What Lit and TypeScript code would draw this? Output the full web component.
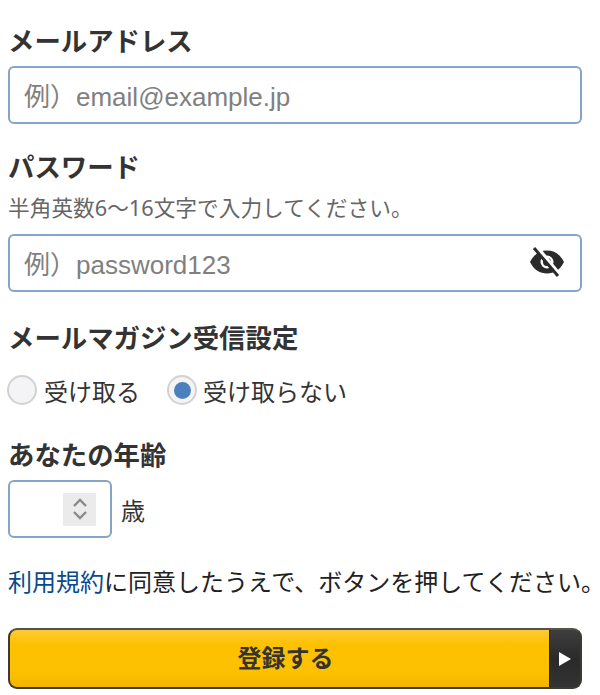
import { LitElement, html, css } from "lit";
import { customElement } from "lit/decorators.js";

@customElement("app-root")
export class AppRoot extends LitElement {
  static styles = css`
    :host {
      display: block;
      width: 600px;
      height: 695px;
      overflow: hidden;
      background: #fff;
      color: #333;
      font-family: "Noto Sans", "Noto Sans CJK JP", sans-serif;
      box-sizing: border-box;
      padding: 24px 0 0 8px;
    }
    .label {
      font-size: 26.4px;
      line-height: 34px;
      font-weight: 700;
      color: #333;
      height: 34px;
      white-space: nowrap;
    }
    .field {
      box-sizing: border-box;
      height: 58px;
      width: 574px;
      border: 2px solid #86a5c6;
      border-radius: 6px;
      margin-top: 8px;
      display: flex;
      align-items: center;
      justify-content: space-between;
      padding: 0 16px 2px 14px;
      background: #fff;
    }
    .ph {
      font-family: "Liberation Sans", "Noto Sans CJK JP", sans-serif;
      font-size: 26px;
      color: #808080;
      white-space: nowrap;
    }
    .pw-label { margin-top: 26px; }
    .hint {
      font-size: 21.7px;
      line-height: 26px;
      color: #666;
      margin-top: 11px;
      white-space: nowrap;
    }
    .field.pw { margin-top: 13px; }
    .mag { margin-top: 29px; }
    .radios {
      display: flex;
      align-items: center;
      margin-top: 20px;
      height: 30px;
      font-size: 24px;
      color: #333;
    }
    .radio {
      box-sizing: border-box;
      width: 30px;
      height: 30px;
      border-radius: 50%;
      border: 2px solid #d2d2d2;
      background: #f4f4f6;
      display: flex;
      align-items: center;
      justify-content: center;
      margin-right: 7px;
      margin-left: -1px;
    }
    .radio i {
      width: 17px;
      height: 17px;
      border-radius: 50%;
      background: #4a80bd;
    }
    .radio.two { margin-left: 27px; margin-right: 6px; }
    .age-label { margin-top: 33px; }
    .age-row {
      display: flex;
      align-items: center;
      margin-top: 8px;
      font-size: 24px;
    }
    .age {
      box-sizing: border-box;
      width: 104px;
      height: 58px;
      border: 2px solid #86a5c6;
      border-radius: 6px;
      display: flex;
      align-items: center;
      justify-content: flex-end;
      padding-right: 14px;
      margin-right: 9px;
    }
    .spin {
      width: 33px;
      height: 33px;
      background: #ebebeb;
      display: flex;
      align-items: center;
      justify-content: center;
    }
    .terms {
      margin-top: 28px;
      font-size: 24px;
      line-height: 32px;
      white-space: nowrap;
      color: #222;
    }
    .terms a { color: #0b4a8a; text-decoration: none; }
    .terms .end { font-feature-settings: "halt"; }
    .btn {
      box-sizing: border-box;
      margin-top: 30px;
      width: 574px;
      height: 61px;
      border-radius: 9px;
      border: 2px solid #3d3a30;
      border-top-color: #55524a;
      overflow: hidden;
      display: flex;
      background: #333;
    }
    .btn-main {
      flex: 1;
      background: linear-gradient(#fdca37 0%, #fec101 25%, #fec101 75%, #f3b400 100%);
      display: flex;
      align-items: center;
      justify-content: center;
      padding: 0 0 5px 12px;
      font-size: 24px;
      font-weight: 700;
      color: #333;
    }
    .btn-arrow {
      width: 30px;
      border-left: 1px solid #222;
      background: linear-gradient(#3e3e3e, #2a2a2a 50%, #333);
      display: flex;
      align-items: center;
      justify-content: center;
    }
  `;

  render() {
    return html`
      <div class="label">メールアドレス</div>
      <div class="field"><span class="ph">例）email@example.jp</span></div>

      <div class="label pw-label">パスワード</div>
      <div class="hint">半角英数6〜16文字で入力してください。</div>
      <div class="field pw">
        <span class="ph">例）password123</span>
        <svg width="34" height="30" viewBox="0 0 34 30">
          <path fill="#2b2b2b" fill-rule="evenodd" d="M0 15C4 7 10 3.5 17 3.5S30 7 34 15c-4 8-10 11.5-17 11.5S4 23 0 15Zm17-6.5a6.5 6.5 0 1 0 0 13 6.5 6.5 0 0 0 0-13Z"/>
          <circle cx="17" cy="15" r="4" fill="#2b2b2b"/>
          <path d="M7 1 30 29" stroke="#fff" stroke-width="5"/>
          <path d="M4 1 28 29" stroke="#2b2b2b" stroke-width="3"/>
        </svg>
      </div>

      <div class="label mag">メールマガジン受信設定</div>
      <div class="radios">
        <span class="radio"></span>受け取る
        <span class="radio two"><i></i></span>受け取らない
      </div>

      <div class="label age-label">あなたの年齢</div>
      <div class="age-row">
        <div class="age">
          <div class="spin">
            <svg width="18" height="24" viewBox="0 0 18 24" fill="none" stroke="#8a8a8a" stroke-width="2.4">
              <path d="M3 9 9 3l6 6M3 15l6 6 6-6"/>
            </svg>
          </div>
        </div>
        歳
      </div>

      <div class="terms"><a>利用規約</a>に同意したうえで、ボタンを押してください<span class="end">。</span></div>

      <div class="btn">
        <div class="btn-main">登録する</div>
        <div class="btn-arrow">
          <svg width="12" height="14" viewBox="0 0 12 14"><path fill="#fff" d="M0 0l12 7-12 7z"/></svg>
        </div>
      </div>
    `;
  }
}
